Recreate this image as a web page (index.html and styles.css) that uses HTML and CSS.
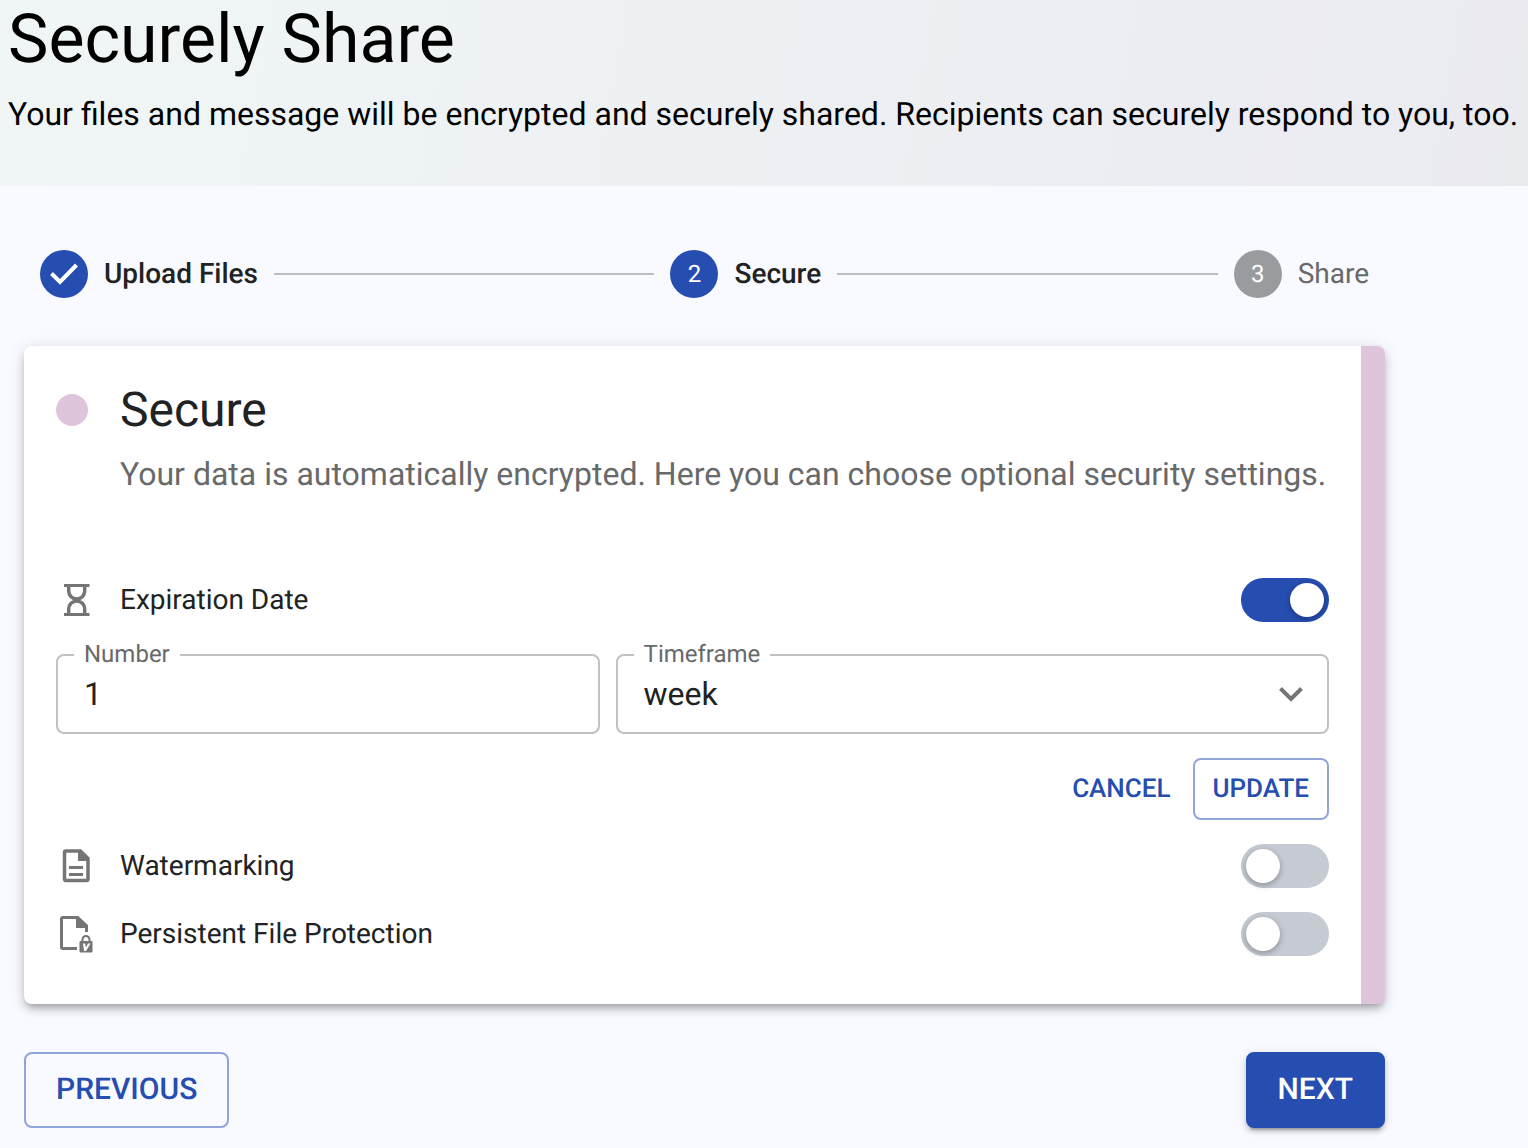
FILE: index.html
```
<!DOCTYPE html>
<html lang="en">
<head>
<meta charset="utf-8">
<meta name="viewport" content="width=device-width, initial-scale=1">
<title>Securely Share</title>
<link rel="stylesheet" href="styles.css">
</head>
<body>
<header class="banner">
  <h1 class="banner-title">Securely Share</h1>
  <p class="banner-text">Your files and message will be encrypted and securely shared. Recipients can securely respond to you, too.</p>
</header>

<main class="content">
  <ol class="stepper">
    <li class="step">
      <span class="step-icon">
        <svg viewBox="0 0 48 48" width="48" height="48" aria-hidden="true"><path d="M11.500 23.500l8.500 8.500 16.500-17" fill="none" stroke="#fff" stroke-width="4"/></svg>
      </span>
      <span class="step-label">Upload Files</span>
    </li>
    <li class="step-line" aria-hidden="true"></li>
    <li class="step" aria-current="step">
      <span class="step-icon">2</span>
      <span class="step-label">Secure</span>
    </li>
    <li class="step-line" aria-hidden="true"></li>
    <li class="step step-pending">
      <span class="step-icon">3</span>
      <span class="step-label">Share</span>
    </li>
  </ol>

  <form class="wizard">
    <section class="card">
      <div class="card-head">
        <span class="dot"></span>
        <div>
          <h2 class="card-title">Secure</h2>
          <p class="card-text">Your data is automatically encrypted. Here you can choose optional security settings.</p>
        </div>
      </div>

      <div class="options">
        <div class="option">
          <svg class="option-icon" viewBox="0 0 40 40" width="40" height="40" aria-hidden="true">
            <path d="M8 5.500h25.500M8 34.500h25.500" fill="none" stroke="#757575" stroke-width="3"/>
            <path d="M12.700 6v5a8 8 0 0 0 16 0V6M12.700 34v-5a8 8 0 0 1 16 0v5" fill="none" stroke="#757575" stroke-width="3.500"/>
          </svg>
          <label class="option-label" for="expiration">Expiration Date</label>
          <input class="switch" type="checkbox" id="expiration" checked>
        </div>

        <div class="expiry">
          <div class="fields">
            <div class="field">
              <label class="field-label" for="number">Number</label>
              <input class="field-control" type="text" inputmode="numeric" id="number" value="1">
            </div>
            <div class="field">
              <label class="field-label" for="timeframe">Timeframe</label>
              <select class="field-control" id="timeframe"><option>week</option></select>
              <svg class="field-arrow" viewBox="0 0 24 16" width="24" height="16" aria-hidden="true"><path d="M1.500 2.500L12 13 22.500 2.500" fill="none" stroke="#757575" stroke-width="4"/></svg>
            </div>
          </div>
          <div class="actions">
            <button class="btn btn-small btn-text" type="button">CANCEL</button>
            <button class="btn btn-small btn-outlined" type="button">UPDATE</button>
          </div>
        </div>

        <div class="option">
          <svg class="option-icon" viewBox="0 0 40 40" width="40" height="40" aria-hidden="true">
            <path d="M10 5h14.500L32 12.500V33a1.500 1.500 0 0 1-1.500 1.500h-20A1.500 1.500 0 0 1 8.500 33V6.500A1.500 1.500 0 0 1 10 5z" fill="none" stroke="#757575" stroke-width="3.500"/>
            <path d="M22 4h3l8 8v3H22zM13 20h14v3H13zM13 27h14v3H13z" fill="#757575"/>
          </svg>
          <label class="option-label" for="watermark">Watermarking</label>
          <input class="switch" type="checkbox" id="watermark">
        </div>

        <div class="option">
          <svg class="option-icon" viewBox="0 0 40 40" width="40" height="40" aria-hidden="true">
            <path d="M21 34.500H7A1.500 1.500 0 0 1 5.500 33V5A1.500 1.500 0 0 1 7 3.500h14.500L30.500 12v6" fill="none" stroke="#757575" stroke-width="3"/>
            <path d="M20 2.500h2.500L32 11.500v2.500H20z" fill="#757575"/>
            <path d="M26.500 28v-2.500a3.500 3.500 0 0 1 7 0V28" fill="none" stroke="#757575" stroke-width="2"/>
            <rect x="23.500" y="27" width="13" height="11.500" rx="1" fill="#757575"/>
            <path d="M27 29.500h2l1 4 2-4h2.500L30 37h-2z" fill="#fff"/>
          </svg>
          <label class="option-label" for="protection">Persistent File Protection</label>
          <input class="switch" type="checkbox" id="protection">
        </div>
      </div>
    </section>

    <div class="wizard-nav">
      <button class="btn btn-large btn-outlined" type="button">PREVIOUS</button>
      <button class="btn btn-large btn-filled" type="button">NEXT</button>
    </div>
  </form>
</main>
</body>
</html>
```
FILE: styles.css
```
:root {
  --blue: #264db0;
  --pink: #dfc5dc;
  --text: #212223;
  --muted: #68696a;
  --line: #c1c1c1;
}

* {
  box-sizing: border-box;
}

body {
  margin: 0;
  background: #f9faff;
  color: var(--text);
  font-family: Roboto, "Liberation Sans", sans-serif;
  font-size: 28px;
  line-height: 32px;
  text-rendering: geometricPrecision;
}

h1, h2, p, ol {
  margin: 0;
  padding: 0;
  font-weight: 400;
}

.banner {
  padding: 0 8px 48px;
  background: linear-gradient(100deg, #f0f6f6 0%, #edf0f3 50%, #ebebf2 94%, #eaebee 100%);
  color: #000;
}

.banner-title {
  margin-bottom: 12px;
  font-size: 68px;
  line-height: 78px;
}

.banner-text {
  font-size: 32px;
  line-height: 48px;
}

.content {
  max-width: 1409px;
  padding: 64px 24px 20px;
}

.stepper {
  display: flex;
  align-items: center;
  gap: 16px;
  padding: 0 16px;
  list-style: none;
}

.step {
  display: flex;
  align-items: center;
  gap: 16px;
  font-weight: 500;
}

.step-icon {
  display: grid;
  place-items: center;
  width: 48px;
  height: 48px;
  border-radius: 50%;
  background: var(--blue);
  color: #fff;
  font-size: 24px;
  font-weight: 400;
}

.step-pending {
  color: var(--muted);
  font-weight: 400;
}

.step-pending .step-icon {
  background: #9a9b9e;
}

.step-line {
  flex: 1;
  height: 2px;
  background: #bdbdbd;
}

.card {
  margin-top: 48px;
  padding: 32px 32px 48px;
  border-right: 24px solid var(--pink);
  border-radius: 8px;
  background: #fff;
  box-shadow: 0 6px 6px -4px rgba(0, 0, 0, .2), 0 6px 8px rgba(0, 0, 0, .14), 0 2px 16px rgba(0, 0, 0, .12);
}

.card-head {
  display: flex;
  gap: 32px;
}

.dot {
  flex: none;
  width: 32px;
  height: 32px;
  margin-top: 16px;
  border-radius: 50%;
  background: var(--pink);
}

.card-title {
  margin-bottom: 8px;
  font-size: 48px;
  line-height: 64px;
}

.card-text {
  color: var(--muted);
  font-size: 32px;
  line-height: 48px;
}

.options {
  display: flex;
  flex-direction: column;
  gap: 24px;
  margin-top: 80px;
}

.option {
  display: flex;
  align-items: center;
  gap: 24px;
  height: 44px;
}

.option-label {
  flex: 1;
}

.switch {
  appearance: none;
  width: 88px;
  height: 44px;
  margin: 0;
  padding: 5px;
  border-radius: 22px;
  background: #c5cad3;
}

.switch::before {
  content: "";
  display: block;
  width: 34px;
  height: 34px;
  border-radius: 50%;
  background: #fff;
  box-shadow: 0 2px 6px rgba(0, 0, 0, .3);
}

.switch:checked {
  background: var(--blue);
}

.switch:checked::before {
  margin-left: auto;
}

.expiry {
  display: grid;
  gap: 24px;
  padding-top: 8px;
}

.fields {
  display: grid;
  grid-template-columns: 16fr 21fr;
  gap: 16px;
}

.field {
  position: relative;
}

/* The label sits on the outline and opens a notch in it. */
.field-label {
  position: absolute;
  top: -14px;
  left: 18px;
  padding: 0 10px;
  background: #fff;
  color: var(--muted);
  font-size: 24px;
  line-height: 28px;
}

.field-control {
  appearance: none;
  display: block;
  width: 100%;
  height: 80px;
  padding: 0 26px;
  border: 2px solid var(--line);
  border-radius: 8px;
  background: #fff;
  color: var(--text);
  font: inherit;
  font-size: 32px;
  line-height: 40px;
  text-rendering: inherit;
}

.field-arrow {
  position: absolute;
  top: 32px;
  right: 26px;
  pointer-events: none;
}

.actions {
  display: flex;
  justify-content: flex-end;
  gap: 8px;
}

.btn {
  border: 2px solid transparent;
  border-radius: 8px;
  background: transparent;
  color: var(--blue);
  font: inherit;
  font-weight: 500;
  text-rendering: inherit;
}

.btn-small {
  height: 62px;
  padding: 0 18px;
  font-size: 26px;
}

.btn-large {
  height: 76px;
  padding: 0 30px;
  font-size: 30px;
}

.btn-text {
  padding: 0 12px;
}

.btn-outlined {
  border-color: #92a5d9;
}

.btn-filled {
  border-color: var(--blue);
  background: var(--blue);
  color: #fff;
  box-shadow: 0 6px 2px -4px rgba(0, 0, 0, .2), 0 4px 4px rgba(0, 0, 0, .14), 0 2px 10px rgba(0, 0, 0, .12);
}

.wizard-nav {
  display: flex;
  justify-content: space-between;
  margin-top: 48px;
}
```
